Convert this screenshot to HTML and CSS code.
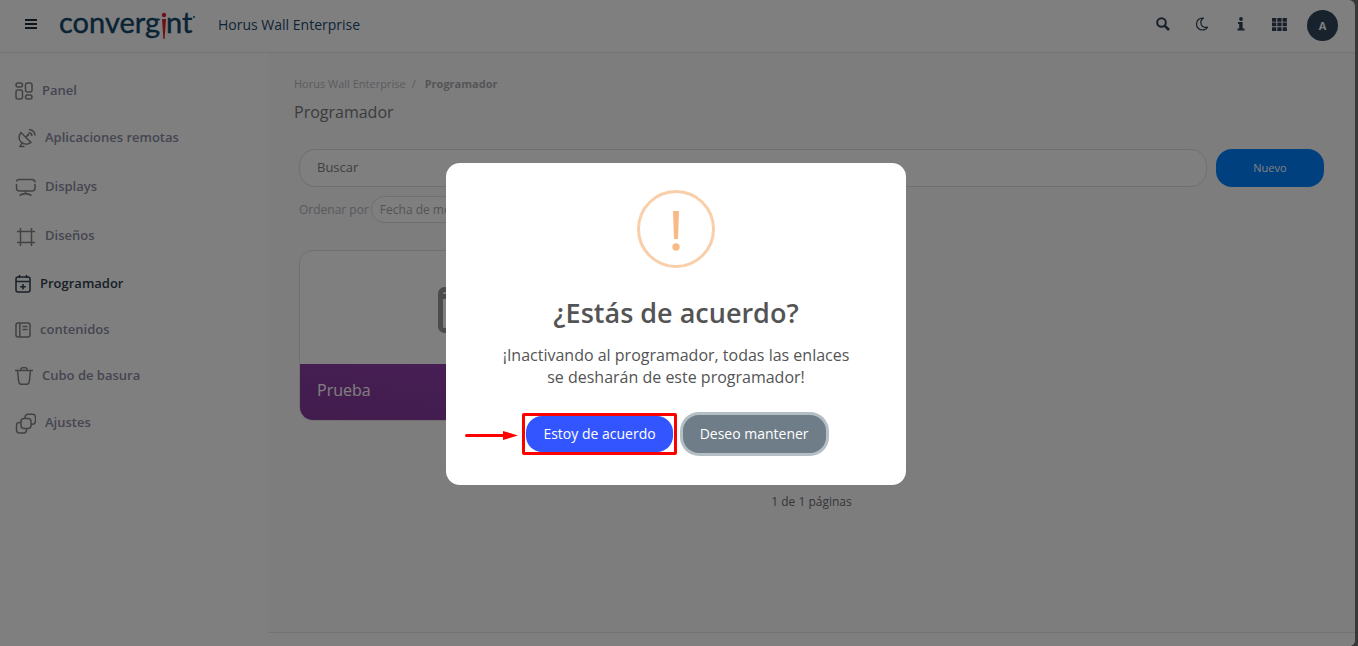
FILE: index.html
```html
<!DOCTYPE html>
<html lang="es">
<head>
    <meta charset="UTF-8">
    <meta name="viewport" content="width=device-width, initial-scale=1.0">
    <title>Horus Wall Enterprise - Programador</title>
    <link rel="stylesheet" href="styles.css">
</head>
<body>
    <div class="app">
        <header class="topbar">
            <button class="icon-btn menu-btn" aria-label="Menú">
                <svg width="12" height="12" viewBox="0 0 12 12" fill="none" stroke="currentColor" stroke-width="2"><path d="M0 2h12M0 6h12M0 10h12"/></svg>
            </button>
            <a class="logo" href="#" aria-label="convergint">
                <svg width="136" height="46" viewBox="0 0 136 46">
                    <text class="logo-text" x="0" y="30">converg</text>
                    <circle cx="105" cy="12" r="2.200" fill="#d8232f"/>
                    <path d="M103 16h4l-1.400 20h-1.200z" fill="#d8232f"/>
                    <text class="logo-text" x="107" y="30">nt</text>
                    <circle cx="135" cy="14" r="1" fill="#1a5276"/>
                </svg>
            </a>
            <span class="app-name">Horus Wall Enterprise</span>
            <div class="tools">
                <button class="icon-btn" aria-label="Buscar">
                    <svg width="14" height="14" viewBox="0 0 14 14" fill="none" stroke="currentColor" stroke-width="2"><circle cx="5.500" cy="5.500" r="4.300"/><path d="M8.800 8.800l4.200 4.200" stroke-width="2.600"/></svg>
                </button>
                <button class="icon-btn" aria-label="Modo oscuro">
                    <svg width="14" height="14" viewBox="0 0 14 14" fill="none" stroke="currentColor" stroke-width="1.200" stroke-linejoin="round"><path d="M7.500 1C4 1 1.500 3.700 1.500 7s2.500 6 6 6c2.200 0 4-1 5-2.800-4 .8-6.700-1.400-6.700-4.600 0-2.200.9-3.700 2.700-4.500z"/></svg>
                </button>
                <button class="icon-btn" aria-label="Información">
                    <svg width="8" height="14" viewBox="0 0 8 14" fill="currentColor"><circle cx="4" cy="2" r="1.900"/><path d="M1 5h4.600v6.500H7.500V13.500H.5v-2H2.200V7H1z"/></svg>
                </button>
                <button class="icon-btn" aria-label="Aplicaciones">
                    <svg width="15" height="13" viewBox="0 0 15 13" fill="currentColor"><path d="M0 0h4.300v3.700H0zM5.300 0h4.300v3.700H5.300zM10.600 0h4.300v3.700h-4.300zM0 4.600h4.300v3.700H0zM5.300 4.600h4.300v3.700H5.300zM10.600 4.600h4.300v3.700h-4.300zM0 9.200h4.300v3.700H0zM5.300 9.200h4.300v3.700H5.300zM10.600 9.200h4.300v3.700h-4.300z"/></svg>
                </button>
                <button class="avatar">A</button>
            </div>
        </header>

        <div class="layout">
            <nav class="sidebar">
                <a href="#">
                    <svg width="18" height="18" viewBox="0 0 18 18"><rect x="1" y="1" width="6.500" height="4" rx="2"/><rect x="1" y="8" width="6.500" height="9" rx="2"/><rect x="10.500" y="1" width="6.500" height="9" rx="2"/><rect x="10.500" y="13" width="6.500" height="4" rx="2"/></svg>
                    Panel
                </a>
                <a href="#">
                    <svg width="21" height="21" viewBox="0 0 21 21"><path d="M6 4.500c-2.500 3-2.500 7 0 9.500s7 3 10 .5L6 4.500z"/><path d="M10.500 9.500L13 7M7 14.500L5.500 18.500M4 18.500h5.500"/><circle cx="13" cy="7" r=".5"/><path d="M13.500 4.500c2 .3 3.300 1.500 3.500 3.500M14 1.500c3.500.3 5.700 2.500 6 6"/></svg>
                    Aplicaciones remotas
                </a>
                <a href="#">
                    <svg width="21" height="21" viewBox="0 0 21 21"><path d="M1.500 4.500C1.700 3 2.500 2.500 4 2.500h13c2 0 3 1 3 3M20 7v4c0 2-1 3-3 3H4.500c-2 0-3-1-3-3V7M10.500 14v2.500M4.500 18.500c4-2.500 8-2.500 12 0"/></svg>
                    Displays
                </a>
                <a href="#">
                    <svg width="21" height="21" viewBox="0 0 21 21"><path d="M5.500 2v18M16.500 2v18M2 5.500h18M2 16.500h18"/></svg>
                    Diseños
                </a>
                <a class="active" href="#">
                    <svg width="16" height="18" viewBox="0 0 16 18"><rect x="1" y="2" width="14" height="15" rx="2"/><path d="M1 6.500h14M4.500 0v3M11.500 0v3M8 9v5.500M5.200 11.700h5.600"/></svg>
                    Programador
                </a>
                <a href="#">
                    <svg width="16" height="18" viewBox="0 0 16 18"><rect x="1" y="2" width="14" height="14" rx="2"/><path d="M4.800 2v14M7.500 5.500h5M7.500 8.500h5"/></svg>
                    contenidos
                </a>
                <a href="#">
                    <svg width="18" height="18" viewBox="0 0 18 18"><path d="M0 3.500h18M5.500 3.500c.3-2 .8-2.800 2-2.800h3c1.200 0 1.700.8 2 2.800M2.500 3.500l1.200 11c.2 2 .8 2.700 2.500 2.700h5.600c1.700 0 2.300-.7 2.500-2.700l1.200-11"/></svg>
                    Cubo de basura
                </a>
                <a href="#">
                    <svg width="21" height="21" viewBox="0 0 21 21"><rect x="6" y="5.500" width="10" height="10" rx="3"/><path d="M10 5.500V4.500c0-2 1-3.200 3-3.200h4.500c2 0 3 1.200 3 3.200V8c0 2-1 3.200-3 3.200H16M6 9.500H4.500c-2 0-3 1-3 3V17c0 2 1 3 3 3H8.500c2 0 3-1 3-3v-1.500"/></svg>
                    Ajustes
                </a>
            </nav>

            <main class="main">
                <div class="page">
                    <div class="breadcrumb">
                        <a href="#">Horus Wall Enterprise</a><span>/</span><b>Programador</b>
                    </div>
                    <h1>Programador</h1>

                    <div class="content">
                        <div class="search-row">
                            <input type="text" placeholder="Buscar" aria-label="Buscar">
                            <button class="new-btn">Nuevo</button>
                        </div>
                        <div class="sort-row">
                            <label for="sort">Ordenar por</label>
                            <select id="sort">
                                <option>Fecha de modificación</option>
                            </select>
                        </div>
                        <div class="cards">
                            <article class="card">
                                <div class="card-icon">
                                    <svg width="46" height="52" viewBox="0 0 46 52" fill="none" stroke="currentColor" stroke-width="5"><rect x="2.500" y="7.500" width="41" height="41" rx="4"/><path d="M2.500 14.500h41M13 1v7M33 1v7M23 23v18M14 32h18"/></svg>
                                </div>
                                <div class="card-title">Prueba</div>
                            </article>
                        </div>
                        <p class="pages">1 de 1 páginas</p>
                    </div>
                </div>
                <footer class="footer"></footer>
            </main>
        </div>
    </div>

    <!-- Confirmation dialog -->
    <div class="overlay">
        <div class="modal" role="dialog" aria-labelledby="modalTitle">
            <div class="modal-icon">
                <svg width="78" height="78" viewBox="0 0 78 78"><circle cx="39" cy="39" r="37.500" fill="none" stroke="#facea8" stroke-width="3"/><path d="M36 21h6l-1 28h-4z" fill="#f8bb86"/><circle cx="39" cy="57" r="3.700" fill="#f8bb86"/></svg>
            </div>
            <h2 id="modalTitle">¿Estás de acuerdo?</h2>
            <p>¡Inactivando al programador, todas las enlaces se desharán de este programador!</p>
            <div class="modal-actions">
                <div class="marked">
                    <button class="confirm-btn">Estoy de acuerdo</button>
                    <svg class="mark-arrow" width="53" height="10" viewBox="0 0 53 10"><path d="M1.500 5.500h40" stroke="#ff0000" stroke-width="3" stroke-linecap="round"/><path d="M38 1l15 4.500L38 10z" fill="#ff0000"/></svg>
                </div>
                <button class="cancel-btn">Deseo mantener</button>
            </div>
        </div>
    </div>
</body>
</html>
```
FILE: styles.css
```css
* {
    box-sizing: border-box;
    margin: 0;
    padding: 0;
    font-family: "Open Sans", "Noto Sans", sans-serif;
}
body {
    background-color: #70706e;
    min-height: 100vh;
    padding-right: 3px;
}
button {
    border: none;
    cursor: pointer;
}
a {
    color: inherit;
    text-decoration: none;
}
.app {
    background-color: #fff;
    border-radius: 0 6px 6px 0;
    min-height: 100vh;
    display: flex;
    flex-direction: column;
    overflow: hidden;
}

/* Top bar */
.topbar {
    display: flex;
    align-items: center;
    height: 53px;
    padding: 0 17px 1px 25px;
    border-bottom: 1px solid #e6e6e6;
    color: #2f4156;
}
.icon-btn {
    background: none;
    color: inherit;
    display: flex;
    justify-content: center;
}
.menu-btn {
    color: #1c2b36;
    margin: 0 22px 3px 0;
}
.logo {
    display: flex;
}
.logo-text {
    font-family: Lato, sans-serif;
    font-size: 29px;
    fill: #12466b;
    stroke: #12466b;
    stroke-width: 0.4px;
}
.app-name {
    color: #1b4a6e;
    font-size: 14px;
    font-weight: 500;
    margin: 0 0 3px 23px;
}
.tools {
    display: flex;
    align-items: center;
    gap: 24px;
    margin-left: auto;
}
.tools .icon-btn {
    width: 15px;
    margin-bottom: 3px;
}
.avatar {
    width: 31px;
    height: 31px;
    margin-left: -4px;
    padding-bottom: 1px;
    border-radius: 50%;
    background-color: #30445a;
    color: #fff;
    font-size: 11px;
    font-weight: 700;
}

.layout {
    display: flex;
    flex: 1;
}

/* Side menu */
.sidebar {
    width: 268px;
    padding: 14px 15px;
    flex-shrink: 0;
}
.sidebar a {
    display: flex;
    align-items: center;
    gap: 9px;
    padding: 12px 0 13px;
    color: #8b8ca2;
    font-size: 13px;
    font-weight: 600;
    line-height: 18px;
}
.sidebar svg {
    margin-top: 3px;
    fill: none;
    stroke: #858585;
    stroke-width: 1.5px;
}
.sidebar .active {
    color: #30404f;
}
.sidebar .active svg {
    stroke: #30404f;
}

/* Page content */
.main {
    flex: 1;
    display: flex;
    flex-direction: column;
    background-color: #fafafd;
}
.page {
    flex: 1;
    padding: 22px 31px 0 26px;
}
.breadcrumb {
    display: flex;
    font-size: 11px;
    line-height: 18px;
    color: #b8b8ba;
}
.breadcrumb span {
    margin: 0 9px 0 6px;
}
.breadcrumb b {
    color: #aaaaad;
}
h1 {
    color: #77777a;
    font-size: 16px;
    font-weight: 400;
    line-height: 24px;
    margin-top: 7px;
}
.content {
    padding-left: 5px;
    margin-top: 25px;
}
.search-row {
    display: flex;
    gap: 9px;
}
.search-row input {
    flex: 1;
    height: 38px;
    padding: 0 17px 2px;
    border: 1px solid #dedee0;
    border-radius: 16px;
    background-color: #fff;
    font-size: 13px;
}
.search-row input::placeholder {
    color: #808083;
}
.new-btn {
    width: 108px;
    padding-bottom: 2px;
    border-radius: 16px;
    background-color: #0080ff;
    color: #fff;
    font-size: 11px;
}
.sort-row {
    display: flex;
    align-items: center;
    gap: 2px;
    margin-top: 9px;
    color: #b2b2b5;
    font-size: 12px;
}
.sort-row select {
    appearance: none;
    height: 27px;
    padding: 0 8px;
    border: 1px solid #dedee0;
    border-radius: 14px;
    background-color: #fff;
    color: #a9a9ac;
    font-size: 12px;
}
.cards {
    display: grid;
    grid-template-columns: repeat(3, 1fr);
    gap: 26px;
    margin-top: 27px;
}
.card {
    border: 1px solid #e2e2e4;
    border-radius: 14px;
    background-color: #fff;
    overflow: hidden;
}
.card-icon {
    display: flex;
    align-items: center;
    justify-content: center;
    height: 113px;
    color: #99999b;
}
.card-title {
    height: 56px;
    padding: 0 17px;
    background: linear-gradient(10deg, #83399a, #9440b0);
    color: #fff;
    font-size: 16px;
    font-weight: 500;
    line-height: 52px;
}
.pages {
    margin-top: 71px;
    color: #6c6c6f;
    font-size: 12px;
    line-height: 20px;
    text-align: center;
}
.footer {
    height: 14px;
    border-top: 1px solid #e6e6e6;
    background-color: #fff;
}

/* Confirmation dialog */
.overlay {
    position: fixed;
    inset: 0;
    display: flex;
    justify-content: center;
    align-items: center;
    padding: 2px 6px 0 0;
    background-color: rgba(0, 0, 0, 0.5);
}
.modal {
    width: 460px;
    max-width: 100%;
    padding: 27px 47px 30px;
    border-radius: 14px;
    background-color: #fff;
    color: #545454;
    text-align: center;
}
.modal-icon {
    display: flex;
    justify-content: center;
}
.modal h2 {
    font-size: 27px;
    font-weight: 600;
    line-height: 36px;
    margin-top: 27px;
}
.modal p {
    font-size: 16px;
    line-height: 22px;
    margin-top: 13px;
}
.modal-actions {
    display: flex;
    justify-content: center;
    align-items: center;
    gap: 6px;
    margin-top: 25px;
    padding-right: 4px;
}
.modal-actions button {
    padding: 0 17px 2px;
    border-radius: 16px;
    color: #fff;
    font-size: 14px;
}
/* Red frame and arrow round the button to press */
.marked {
    position: relative;
    display: flex;
    padding: 0 1px;
    border: 3px solid #ff0000;
    border-radius: 2px;
}
.mark-arrow {
    position: absolute;
    right: 100%;
    top: 14px;
    margin-right: 7px;
}
.modal-actions .confirm-btn {
    height: 36px;
    background-color: #3355ff;
}
.modal-actions .cancel-btn {
    height: 38px;
    background-color: #6e7d88;
    box-shadow: 0 0 0 3px #b4bec5;
}
```
